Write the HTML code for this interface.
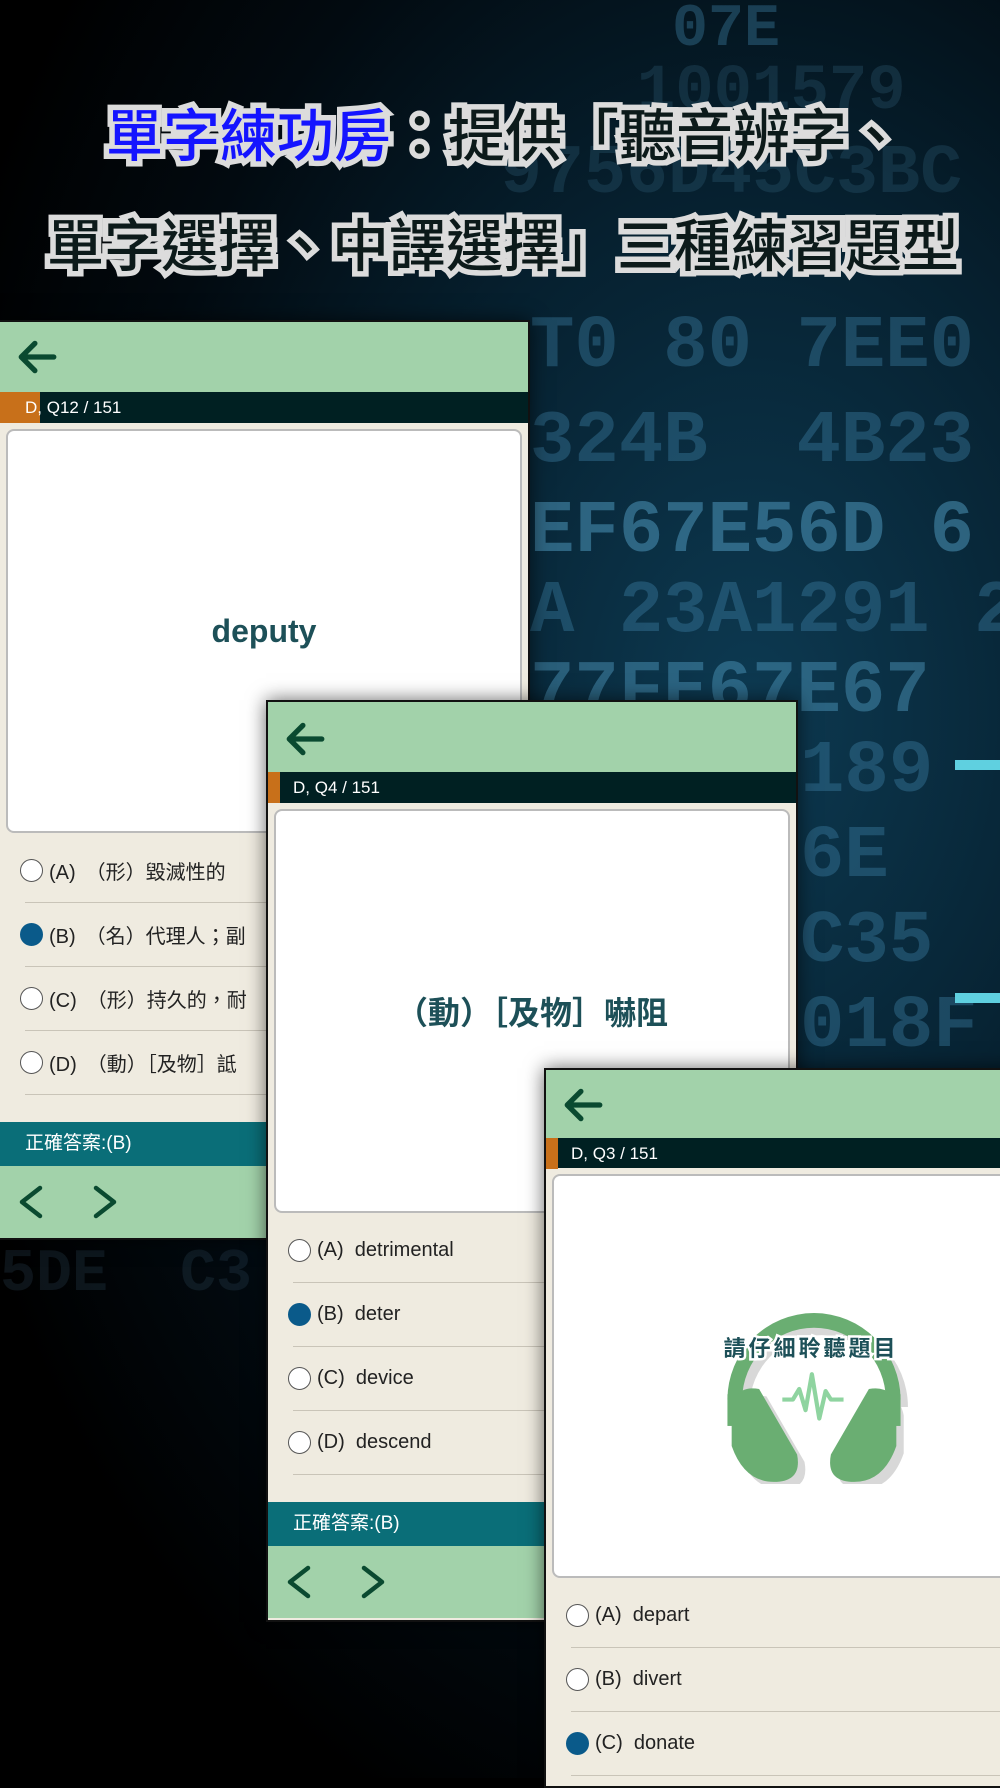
<!DOCTYPE html>
<html><head><meta charset="utf-8"><style>
*{margin:0;padding:0;box-sizing:border-box}
body{width:1000px;height:1778px;overflow:hidden;background:#000;font-family:"Liberation Sans","Noto Sans CJK TC",sans-serif;position:relative}
.bg{position:absolute;inset:0;background:radial-gradient(ellipse at 75% 40%,#0d3a52 0%,#06202f 35%,#020a10 60%,#000 80%)}
.hex{position:absolute;font-family:"Liberation Mono",monospace;font-weight:bold;color:rgba(70,140,180,.35);white-space:pre;line-height:1}
.title{position:absolute;left:0;width:1000px;text-align:center;white-space:nowrap;font-family:"Noto Sans CJK TC",sans-serif;font-weight:500;font-size:57px;color:#0c1a1a;-webkit-text-stroke:11px #dcdcdc;paint-order:stroke fill;line-height:1}
.panel{position:absolute;width:532px;background:#efebe0;box-shadow:0 0 18px rgba(0,0,0,.6);border:2px solid #111;overflow:hidden}
.hd{height:70px;background:#a2d2aa;position:relative}
.bar{height:31px;background:#002022;color:#fff;font-size:17px;line-height:31px;padding-left:25px;position:relative}
.bar i{position:absolute;left:0;top:0;width:12px;height:31px;background:#c8701a}
.box{margin:6px 6px 0 6px;height:404px;background:#fff;border:2px solid #bbb;border-radius:8px;display:flex;align-items:center;justify-content:center;color:#1d5058;font-weight:bold;font-size:32px}
.opts{padding:6px 0 0 20px}
.opt{height:64px;border-bottom:1px solid #c9c4b8;display:flex;align-items:center;font-size:20px;color:#222;margin-left:5px}
.opt .r{width:23px;height:23px;border-radius:50%;border:1.5px solid #555;background:#fff;margin-left:-5px;margin-right:6px;flex:none}
.opt .r.on{background:#0a5a8a;border-color:#0a5a8a}
.ans{height:44px;background:#0a6e78;color:#fff;font-size:19px;line-height:44px;padding-left:25px;margin-top:5px}
.nav{height:72px;background:#a2d2aa;position:relative}
</style></head><body>
<div class="bg"></div>
<div class="hex" style="left:600px;top:0;font-size:60px">  07E</div>
<div class="hex" style="left:560px;top:60px;font-size:64px;color:rgba(60,110,140,.25)">  1001579</div>
<div class="hex" style="left:500px;top:140px;font-size:70px;color:rgba(60,110,140,.25)">9756D45C3BC</div>
<div class="hex" style="left:530px;top:310px;font-size:74px">T0 80 7EE0</div>
<div class="hex" style="left:530px;top:405px;font-size:74px">324B  4B23</div>
<div class="hex" style="left:530px;top:495px;font-size:74px;color:rgba(90,170,210,.45)">EF67E56D 6</div>
<div class="hex" style="left:530px;top:575px;font-size:74px">A 23A1291 2</div>
<div class="hex" style="left:530px;top:655px;font-size:74px;color:rgba(90,170,210,.4)">77FE67E67</div>
<div class="hex" style="left:800px;top:735px;font-size:74px">189</div>
<div class="hex" style="left:800px;top:820px;font-size:74px">6E</div>
<div class="hex" style="left:800px;top:905px;font-size:74px">C35</div>
<div class="hex" style="left:800px;top:990px;font-size:74px">018F</div>
<div style="position:absolute;left:955px;top:760px;width:45px;height:10px;background:#5fd0e0"></div>
<div style="position:absolute;left:955px;top:993px;width:45px;height:10px;background:#5fd0e0"></div>
<div class="hex" style="left:0;top:1245px;font-size:60px;color:rgba(50,80,100,.25)">5DE  C3</div>

<div class="title" style="top:104px;padding-left:10px"><span style="color:#1414ff">單字練功房</span>：提供「聽音辨字、</div>
<div class="title" style="top:214px;padding-left:6px">單字選擇、中譯選擇」三種練習題型</div>

<svg width="0" height="0" style="position:absolute"><defs>
<symbol id="back" viewBox="0 0 40 40"><path d="M36 20H6M18 7L5 20l13 13" fill="none" stroke="#0a4a30" stroke-width="5" stroke-linecap="round" stroke-linejoin="round"/></symbol>
<symbol id="nav" viewBox="0 0 110 40"><path d="M26 6L8 20l18 14M82 6l18 14-18 14" fill="none" stroke="#0a4a30" stroke-width="4.5" stroke-linecap="round" stroke-linejoin="round"/></symbol>
</defs></svg>

<div class="panel" style="left:-2px;top:320px;height:920px">
 <div class="hd"><svg style="position:absolute;left:16px;top:14px" width="42" height="42"><use href="#back"/></svg></div>
 <div class="bar"><i style="width:40px"></i><span style="position:relative">D, Q12 / 151</span></div>
 <div class="box">deputy</div>
 <div class="opts">
  <div class="opt"><span class="r"></span>(A)　（形）毀滅性的</div>
  <div class="opt"><span class="r on"></span>(B)　（名）代理人；副</div>
  <div class="opt"><span class="r"></span>(C)　（形）持久的，耐</div>
  <div class="opt"><span class="r"></span>(D)　（動）［及物］詆</div>
 </div>
 <div class="ans" style="margin-top:27px">正確答案:(B)</div>
 <div class="nav"><svg style="position:absolute;left:14px;top:16px" width="110" height="40"><use href="#nav"/></svg></div>
</div>

<div class="panel" style="left:266px;top:700px;height:922px">
 <div class="hd"><svg style="position:absolute;left:16px;top:16px" width="42" height="42"><use href="#back"/></svg></div>
 <div class="bar"><i></i>D, Q4 / 151</div>
 <div class="box">（動）［及物］嚇阻</div>
 <div class="opts">
  <div class="opt"><span class="r"></span>(A)&nbsp;&nbsp;detrimental</div>
  <div class="opt"><span class="r on"></span>(B)&nbsp;&nbsp;deter</div>
  <div class="opt"><span class="r"></span>(C)&nbsp;&nbsp;device</div>
  <div class="opt"><span class="r"></span>(D)&nbsp;&nbsp;descend</div>
 </div>
 <div class="ans" style="margin-top:27px">正確答案:(B)</div>
 <div class="nav"><svg style="position:absolute;left:14px;top:16px" width="110" height="40"><use href="#nav"/></svg></div>
</div>

<div class="panel" style="left:544px;top:1068px;height:720px;border-right:none">
 <div class="hd" style="height:68px"><svg style="position:absolute;left:16px;top:14px" width="42" height="42"><use href="#back"/></svg></div>
 <div class="bar" style="height:30px"><i></i>D, Q3 / 151</div>
 <div class="box" style="position:relative;display:block">
  <svg style="position:absolute;left:165px;top:118px" width="190" height="190" viewBox="0 0 180 180">
   <g transform="translate(7,7)" fill="#d8d8d8"><path d="M8 100 A82 82 0 0 1 172 100 L158 100 A68 68 0 0 0 22 100Z"/><path d="M12 108 q4-22 26-18 l36 62 q5 26-22 26 q-28 0-40-34Z"/><path d="M168 108 q-4-22-26-18 l-36 62 q-5 26 22 26 q28 0 40-34Z"/></g>
   <path d="M8 100 A82 82 0 0 1 172 100 L158 100 A68 68 0 0 0 22 100Z" fill="#6aae72"/>
   <rect x="8" y="95" width="14" height="30" fill="#6aae72"/><rect x="158" y="95" width="14" height="30" fill="#6aae72"/>
   <path d="M12 108 q4-22 26-18 l36 62 q5 26-22 26 q-28 0-40-34Z" fill="#6aae72"/>
   <path d="M168 108 q-4-22-26-18 l-36 62 q-5 26 22 26 q28 0 40-34Z" fill="#6aae72"/>
   <path d="M60 100h10l6-10 6 20 6-34 7 42 6-26 5 8h12" fill="none" stroke="#8fd4a0" stroke-width="4" stroke-linejoin="round"/>
  </svg>
  <div style="position:absolute;left:0;right:0;top:155px;text-align:center;font-size:22px;color:#1d5058;font-weight:bold;letter-spacing:3px;font-family:'Noto Sans CJK TC',sans-serif;-webkit-text-stroke:5px #fff;paint-order:stroke fill">請仔細聆聽題目</div>
 </div>
 <div class="opts">
  <div class="opt"><span class="r"></span>(A)&nbsp;&nbsp;depart</div>
  <div class="opt"><span class="r"></span>(B)&nbsp;&nbsp;divert</div>
  <div class="opt"><span class="r on"></span>(C)&nbsp;&nbsp;donate</div>
 </div>
</div>
</body></html>
